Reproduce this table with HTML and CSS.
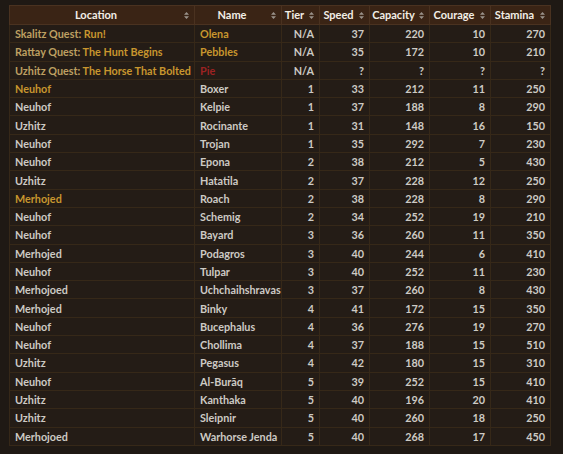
FILE: index.html
```html
<!DOCTYPE html>
<html>
<head>
<meta charset="utf-8">
<link rel="stylesheet" href="styles.css">
</head>
<body>
<table class="horses">
<colgroup>
<col class="c-loc"><col class="c-name"><col class="c-tier"><col class="c-speed"><col class="c-cap"><col class="c-cour"><col class="c-stam">
</colgroup>
<thead>
<tr>
<th><div class="th"><span class="lbl">Location</span><svg class="sort" viewBox="0 0 5 7" width="5" height="7"><path d="M2.5 0 L5 2.8 L0 2.8 Z M2.5 7 L5 4.2 L0 4.2 Z"/></svg></div></th>
<th><div class="th"><span class="lbl">Name</span><svg class="sort" viewBox="0 0 5 7" width="5" height="7"><path d="M2.5 0 L5 2.8 L0 2.8 Z M2.5 7 L5 4.2 L0 4.2 Z"/></svg></div></th>
<th><div class="th"><span class="lbl">Tier</span><svg class="sort" viewBox="0 0 5 7" width="5" height="7"><path d="M2.5 0 L5 2.8 L0 2.8 Z M2.5 7 L5 4.2 L0 4.2 Z"/></svg></div></th>
<th><div class="th"><span class="lbl">Speed</span><svg class="sort" viewBox="0 0 5 7" width="5" height="7"><path d="M2.5 0 L5 2.8 L0 2.8 Z M2.5 7 L5 4.2 L0 4.2 Z"/></svg></div></th>
<th><div class="th"><span class="lbl">Capacity</span><svg class="sort" viewBox="0 0 5 7" width="5" height="7"><path d="M2.5 0 L5 2.8 L0 2.8 Z M2.5 7 L5 4.2 L0 4.2 Z"/></svg></div></th>
<th><div class="th"><span class="lbl">Courage</span><svg class="sort" viewBox="0 0 5 7" width="5" height="7"><path d="M2.5 0 L5 2.8 L0 2.8 Z M2.5 7 L5 4.2 L0 4.2 Z"/></svg></div></th>
<th><div class="th"><span class="lbl">Stamina</span><svg class="sort" viewBox="0 0 5 7" width="5" height="7"><path d="M2.5 0 L5 2.8 L0 2.8 Z M2.5 7 L5 4.2 L0 4.2 Z"/></svg></div></th>
</tr>
</thead>
<tbody>
<tr><td><span class="quest">Skalitz Quest:</span> <span class="gold">Run!</span></td><td class="gold">Olena</td><td class="num">N/A</td><td class="num">37</td><td class="num">220</td><td class="num">10</td><td class="num">270</td></tr>
<tr><td><span class="quest">Rattay Quest:</span> <span class="gold">The Hunt Begins</span></td><td class="gold">Pebbles</td><td class="num">N/A</td><td class="num">35</td><td class="num">172</td><td class="num">10</td><td class="num">210</td></tr>
<tr><td><span class="quest">Uzhitz Quest:</span> <span class="gold">The Horse That Bolted</span></td><td class="red">Pie</td><td class="num">N/A</td><td class="num">?</td><td class="num">?</td><td class="num">?</td><td class="num">?</td></tr>
<tr><td class="gold">Neuhof</td><td>Boxer</td><td class="num">1</td><td class="num">33</td><td class="num">212</td><td class="num">11</td><td class="num">250</td></tr>
<tr><td>Neuhof</td><td>Kelpie</td><td class="num">1</td><td class="num">37</td><td class="num">188</td><td class="num">8</td><td class="num">290</td></tr>
<tr><td>Uzhitz</td><td>Rocinante</td><td class="num">1</td><td class="num">31</td><td class="num">148</td><td class="num">16</td><td class="num">150</td></tr>
<tr><td>Neuhof</td><td>Trojan</td><td class="num">1</td><td class="num">35</td><td class="num">292</td><td class="num">7</td><td class="num">230</td></tr>
<tr><td>Neuhof</td><td>Epona</td><td class="num">2</td><td class="num">38</td><td class="num">212</td><td class="num">5</td><td class="num">430</td></tr>
<tr><td>Uzhitz</td><td>Hatatila</td><td class="num">2</td><td class="num">37</td><td class="num">228</td><td class="num">12</td><td class="num">250</td></tr>
<tr><td class="gold">Merhojed</td><td>Roach</td><td class="num">2</td><td class="num">38</td><td class="num">228</td><td class="num">8</td><td class="num">290</td></tr>
<tr><td>Neuhof</td><td>Schemig</td><td class="num">2</td><td class="num">34</td><td class="num">252</td><td class="num">19</td><td class="num">210</td></tr>
<tr><td>Neuhof</td><td>Bayard</td><td class="num">3</td><td class="num">36</td><td class="num">260</td><td class="num">11</td><td class="num">350</td></tr>
<tr><td>Merhojed</td><td>Podagros</td><td class="num">3</td><td class="num">40</td><td class="num">244</td><td class="num">6</td><td class="num">410</td></tr>
<tr><td>Neuhof</td><td>Tulpar</td><td class="num">3</td><td class="num">40</td><td class="num">252</td><td class="num">11</td><td class="num">230</td></tr>
<tr><td>Merhojoed</td><td>Uchchaihshravas</td><td class="num">3</td><td class="num">37</td><td class="num">260</td><td class="num">8</td><td class="num">430</td></tr>
<tr><td>Merhojed</td><td>Binky</td><td class="num">4</td><td class="num">41</td><td class="num">172</td><td class="num">15</td><td class="num">350</td></tr>
<tr><td>Neuhof</td><td>Bucephalus</td><td class="num">4</td><td class="num">36</td><td class="num">276</td><td class="num">19</td><td class="num">270</td></tr>
<tr><td>Neuhof</td><td>Chollima</td><td class="num">4</td><td class="num">37</td><td class="num">188</td><td class="num">15</td><td class="num">510</td></tr>
<tr><td>Uzhitz</td><td>Pegasus</td><td class="num">4</td><td class="num">42</td><td class="num">180</td><td class="num">15</td><td class="num">310</td></tr>
<tr><td>Neuhof</td><td>Al-Burāq</td><td class="num">5</td><td class="num">39</td><td class="num">252</td><td class="num">15</td><td class="num">410</td></tr>
<tr><td>Uzhitz</td><td>Kanthaka</td><td class="num">5</td><td class="num">40</td><td class="num">196</td><td class="num">20</td><td class="num">410</td></tr>
<tr><td>Uzhitz</td><td>Sleipnir</td><td class="num">5</td><td class="num">40</td><td class="num">260</td><td class="num">18</td><td class="num">250</td></tr>
<tr><td>Merhojoed</td><td>Warhorse Jenda</td><td class="num">5</td><td class="num">40</td><td class="num">268</td><td class="num">17</td><td class="num">450</td></tr>
</tbody>
</table>
</body>
</html>
```
FILE: styles.css
```css
html, body {
  margin: 0;
  padding: 0;
  background: #1f1914;
  height: 100%;
}
body {
  padding: 5px 0 0 9px;
  box-sizing: border-box;
  font-family: Lato, "Open Sans", sans-serif;
  font-size: 10.8px;
  font-weight: 700;
  color: #cdcac4;
}
.horses {
  border-collapse: collapse;
  table-layout: fixed;
  width: 541px;
  background: #241c16;
  border: 1px solid #3b2c1d;
}
.c-loc { width: 185px; }
.c-name { width: 87px; }
.c-tier { width: 38px; }
.c-speed { width: 50px; }
.c-cap { width: 60px; }
.c-cour { width: 61px; }
.c-stam { width: 60px; }

thead th {
  height: 18px;
  padding: 0;
  background: #3a2415;
  border: 1px solid #4a3220;
  color: #f2eee6;
  font-weight: 700;
  font-size: 11px;
  line-height: 14px;
}
.th {
  display: flex;
  align-items: center;
  gap: 4px;
  padding: 0 5px 0 2px;
}
.th .lbl {
  flex: 1;
  text-align: center;
}
.sort {
  fill: #9a928a;
  flex: none;
}
tbody td {
  height: 17.3px;
  padding: 0 5px;
  border: 1px solid #362818;
  white-space: nowrap;
  overflow: hidden;
  line-height: 13px;
}
td.num { text-align: right; }
.gold { color: #c8962e; }
.quest { color: #bea062; }
.red { color: #9c2222; }
```
